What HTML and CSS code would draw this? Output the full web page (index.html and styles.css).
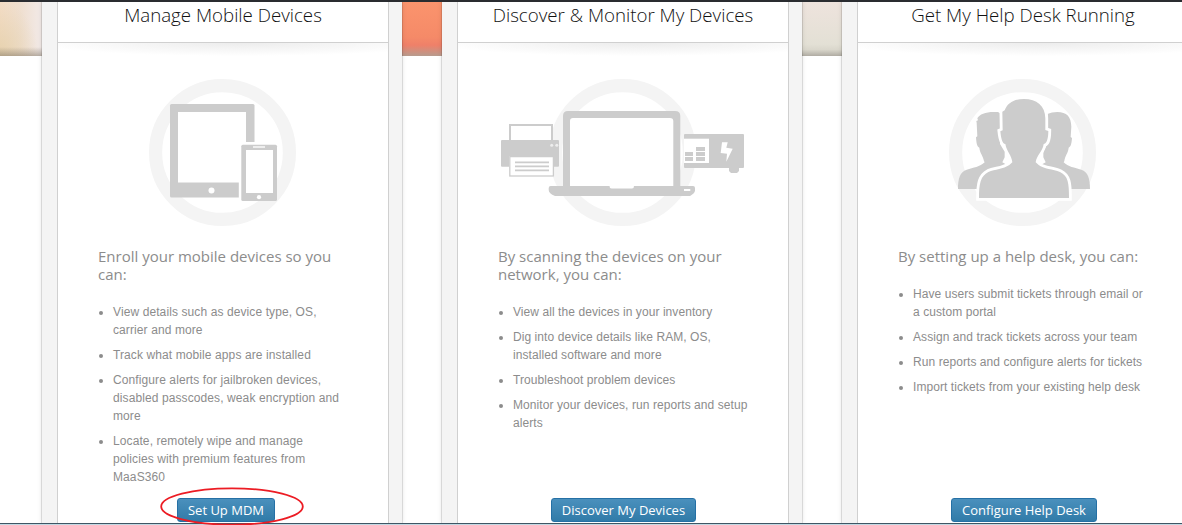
FILE: index.html
```html
<!DOCTYPE html>
<html lang="en">
<head>
<meta charset="utf-8">
<title>Get Started</title>
<link rel="stylesheet" href="styles.css">
</head>
<body>
<main class="page">
  <section class="panel">
    <div class="card">
      <h2 class="card-title">Manage Mobile Devices</h2>
      <div class="card-body">
        <svg class="art" viewBox="0 0 330 147">
          <circle class="ring" cx="164.5" cy="73.5" r="66.9"/>
          <rect class="ink" x="112" y="25" width="84.5" height="93.5" rx="1.5"/>
          <rect class="paper" x="120" y="33" width="68" height="70.5"/>
          <circle class="paper" cx="153.5" cy="111.6" r="3"/>
          <rect class="paper" x="180.8" y="63" width="38" height="56"/>
          <rect class="ink" x="183.3" y="65.7" width="35.7" height="56.3" rx="1.5"/>
          <rect class="paper" x="188" y="71" width="27" height="43"/>
          <rect class="soft" x="195" y="67" width="12" height="2"/>
          <circle class="paper" cx="201" cy="118.2" r="2.1"/>
        </svg>
        <p class="lead">Enroll your mobile devices so you can:</p>
        <ul class="list list-narrow">
          <li>View details such as device type, OS, carrier and more</li>
          <li>Track what mobile apps are installed</li>
          <li>Configure alerts for jailbroken devices, disabled passcodes, weak encryption and more</li>
          <li>Locate, remotely wipe and manage policies with premium features from MaaS360</li>
        </ul>
        <a class="btn btn-mdm">Set Up MDM</a>
      </div>
    </div>
  </section>
  <section class="panel">
    <div class="card">
      <h2 class="card-title">Discover &amp; Monitor My Devices</h2>
      <div class="card-body">
        <svg class="art" viewBox="0 0 330 147">
          <circle class="ring" cx="164.5" cy="73.5" r="66.9"/>
          <rect class="paper" x="51" y="45" width="44" height="18"/>
          <rect class="outline" x="52" y="46" width="42" height="18"/>
          <rect class="ink" x="43" y="61" width="58" height="26.7" rx="1"/>
          <circle class="soft" cx="93.7" cy="66.3" r="1.5"/>
          <circle class="soft" cx="98.8" cy="66.3" r="1.5"/>
          <rect class="paper" x="51" y="77" width="45" height="21"/>
          <rect class="outline-thin" x="51.8" y="77.6" width="43.6" height="19.4"/>
          <path class="lines" d="M57 83.4h34M57 87.4h34M57 91.4h34"/>
          <path class="ink" d="M105 107V37q0-5 5-5h107q5.3 0 5.3 5v70H235q2 0 2 2v2.5q0 2.500-5 5.500H97q-6.300-2.500-6.300-6v-2q0-2 2-2z"/>
          <path class="paper" d="M112 107V42q0-3 3-3h97q3.300 0 3.300 3v65H176q0 2.500-2 2.500h-20.500q-2 0-2-2.500z"/>
          <rect class="paper" x="226" y="110" width="6.300" height="2"/>
          <rect class="ink" x="226" y="55" width="60" height="34" rx="1"/>
          <rect class="paper" x="226" y="59.700" width="25" height="24.300"/>
          <path class="ink" d="M227 73h8v4h-8zM227 78h8v4h-8zM238 68h9v4h-9zM238 73h9v4h-9zM238 78h9v4h-9zM271 88h10v4l-2 2h-6l-2-2z"/>
          <path class="paper" d="M264 63.300h5.700l-1.400 5.400 6.400 1-6.400 13 .7-8-6.300-.7z"/>
        </svg>
        <p class="lead">By scanning the devices on your network, you can:</p>
        <ul class="list">
          <li>View all the devices in your inventory</li>
          <li>Dig into device details like RAM, OS, installed software and more</li>
          <li>Troubleshoot problem devices</li>
          <li>Monitor your devices, run reports and setup alerts</li>
        </ul>
        <a class="btn btn-discover">Discover My Devices</a>
      </div>
    </div>
  </section>
  <section class="panel">
    <div class="card">
      <h2 class="card-title">Get My Help Desk Running</h2>
      <div class="card-body">
        <svg class="art" viewBox="0 0 330 147">
          <circle class="ring" cx="164.5" cy="73.5" r="66.900"/>
          <g transform="translate(82 -9) scale(.33333)">
            <path class="ink" d="M110 158L109 153L114 151L112 145C118 132 140 125 165 126H174L180 130V222L194 245V262L187 277L200 284L180 310L110 357H54C54 325 60 306 80 299C100 293 120 291 134 277L132 273C128 255 120 250 118 233C110 230 109 215 108 202L112 199Z"/>
            <path class="ink" d="M394 170C394 140 380 126 352 126Q335 126 322 132V222L310 245V262L317 277L304 284L324 310L394 357H450C450 325 444 306 424 299C404 293 384 291 371 277L373 273C376 255 384 250 386 233C394 230 395 215 396 204L392 201Z"/>
            <path class="person" d="M187 125L194 121C203 98 222 87 252 87C290 87 316 108 316 145V180L325 183C325 210 318 222 311 222C308 245 290 255 287 277L296 285C310 297 340 297 360 306C385 318 387 340 387 384H117C117 340 122 318 145 306C165 298 190 297 208 285L217 277C215 255 200 245 196 222C187 222 183 205 181 184L188 181Z"/>
          </g>
        </svg>
        <p class="lead">By setting up a help desk, you can:</p>
        <ul class="list">
          <li>Have users submit tickets through email or a custom portal</li>
          <li>Assign and track tickets across your team</li>
          <li>Run reports and configure alerts for tickets</li>
          <li>Import tickets from your existing help desk</li>
        </ul>
        <a class="btn btn-desk">Configure Help Desk</a>
      </div>
    </div>
  </section>
</main>
<svg class="marker" viewBox="0 0 144 39"><ellipse cx="72" cy="19.500" rx="70.800" ry="18.200"/></svg>
</body>
</html>
```

FILE: styles.css
```css
* { box-sizing: border-box; }
body {
  margin: 0;
  width: 1182px;
  height: 525px;
  overflow: hidden;
  position: relative;
  background: #c3d9e3;
}
.page {
  display: flex;
  gap: 40px;
  height: 524px;
  padding-left: 42px;
  overflow: hidden;
  border-top: 2px solid #2a2c30;
  border-bottom: 1px solid #3f5665;
  background:
    linear-gradient(transparent 45px, rgba(110, 100, 85, .45) 54px) 0 0 / 42px 54px no-repeat,
    radial-gradient(ellipse 38px 50px at 0 50px, rgba(228, 208, 170, .8), transparent) 0 0 / 42px 54px no-repeat,
    linear-gradient(90deg, #f3dcc5, #efdfd0 50%, #f2eae8) 0 0 / 42px 54px no-repeat,
    linear-gradient(#fb946d, #f58a68 65%, #ef8069 80%, #b79b8e) 402px 0 / 40px 54px no-repeat,
    linear-gradient(#eee3dd, #e3e0d5 78%, #dad7cc 88%, #b0aca3) 802px 0 / 40px 54px no-repeat,
    #fff;
}
.panel {
  flex: 0 0 360px;
  padding: 0 13px 0 15px;
  background: #f4f4f4;
  box-shadow: 0 0 0 1px rgba(0, 0, 0, .1), 0 0 5px rgba(0, 0, 0, .13);
}
.card {
  display: flex;
  flex-direction: column;
  height: 100%;
  background: #fff;
  border: solid #d0d0d0;
  border-width: 0 1px;
}
.card-title {
  flex: 0 0 41px;
  margin: 0;
  border-bottom: 1px solid #d0d0d0;
  font: 300 18.700px/25px "Open Sans", sans-serif;
  text-align: center;
  color: #111;
}
.card-body {
  flex: 1;
  display: flex;
  flex-direction: column;
  padding: 36px 40px 1px;
  background: radial-gradient(ellipse 62% 13px at 55% 0, #ececec, #fff) no-repeat;
}
.art { width: 330px; height: 147px; margin: 0 -40px; flex: none; }
.ring { fill: none; stroke: #f4f4f4; stroke-width: 13.2; }
.ink { fill: #ccc; }
.paper { fill: #fff; }
.soft { fill: #eee; }
.outline { fill: none; stroke: #ccc; stroke-width: 2; }
.outline-thin { fill: none; stroke: #ccc; stroke-width: 1.3; }
.lines { stroke: #ccc; stroke-width: 1.7; }
.person { fill: #ccc; stroke: #fff; stroke-width: 17; paint-order: stroke; }
.lead {
  margin: 21px 0 20px;
  font: 400 15px/18px "Open Sans", sans-serif;
  color: #8c8c8c;
}
.list {
  margin: 0 -4px 0 0;
  padding: 0 0 0 15px;
  font: 12px/18px "Liberation Sans", Arial, sans-serif;
  letter-spacing: .07px;
  color: #8c8c8c;
}
.list-narrow { padding-right: 8px; letter-spacing: .1px; }
.list li + li { margin-top: 7px; }
.btn {
  height: 24px;
  margin-top: auto;
  align-self: center;
  border: 1px solid #2570a5;
  border-radius: 3px;
  background: linear-gradient(#4a90bd, #317ba8);
  font: 400 13px/23px "Open Sans", sans-serif;
  text-align: center;
  white-space: nowrap;
  color: #fff;
}
.btn-mdm { width: 98px; margin-right: -6px; }
.btn-discover { width: 145px; margin-right: -1px; }
.btn-desk { width: 146px; margin-right: -2px; }
.marker {
  position: absolute;
  left: 160px;
  top: 487px;
  width: 144px;
  height: 39px;
  fill: none;
  stroke: #ec1c24;
  stroke-width: 1.8;
}
```
